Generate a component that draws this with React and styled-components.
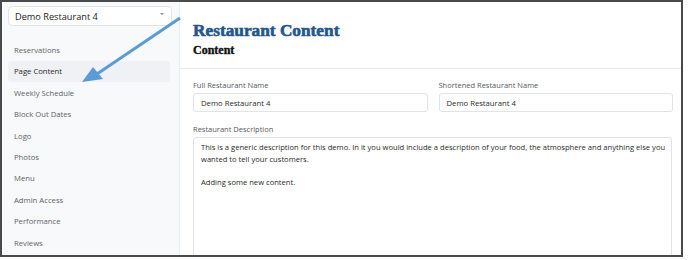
import styled, { createGlobalStyle } from 'styled-components';

const GlobalStyle = createGlobalStyle`
  body {
    margin: 0;
    background: #ffffff;
    font-family: 'Open Sans', 'Liberation Sans', sans-serif;
  }
`;

const Frame = styled.div`
  position: relative;
  display: flex;
  box-sizing: border-box;
  width: 683px;
  height: 257px;
  border: 2px solid #4a4a4a;
  overflow: hidden;
`;

const Sidebar = styled.aside`
  box-sizing: border-box;
  width: 178px;
  flex-shrink: 0;
  padding: 4px 7px 0 6px;
  background: #f8f9fb;
  border-right: 1px solid #eceef1;
`;

const Select = styled.div`
  display: flex;
  align-items: center;
  justify-content: space-between;
  box-sizing: border-box;
  height: 20px;
  padding: 0 7px 0 6px;
  background: #ffffff;
  border: 1px solid #e2e4e8;
  border-radius: 4px;
  font-size: 9.2px;
  color: #222;
`;

const Caret = styled.span`
  width: 0;
  height: 0;
  border-left: 2px solid transparent;
  border-right: 2px solid transparent;
  border-top: 2.5px solid #888;
  margin-top: -4px;
`;

const Nav = styled.nav`
  display: flex;
  flex-direction: column;
  margin-top: 13.3px;
  width: 162px;
`;

const NavItem = styled.div`
  display: flex;
  align-items: center;
  height: 21.4px;
  padding-left: 6px;
  border-radius: 3px;
  font-size: 7.7px;
  color: ${(p) => (p.$active ? '#2a2a2a' : '#5f6368')};
  background: ${(p) => (p.$active ? '#eff1f4' : 'transparent')};
`;

const Main = styled.main`
  flex: 1;
  min-width: 0;
  display: flex;
  flex-direction: column;
  background: #ffffff;
`;

const Header = styled.header`
  box-sizing: border-box;
  flex-shrink: 0;
  height: 67px;
  padding: 19.3px 13px 0;
  border-bottom: 1px solid #e8eaed;
`;

const Title = styled.h1`
  margin: 0;
  font-family: 'Liberation Serif', serif;
  font-weight: 700;
  font-size: 17.3px;
  line-height: 20px;
  color: #23578a;
  -webkit-text-stroke: 0.6px #23578a;
`;

const Subtitle = styled.h2`
  margin: 1.7px 0 0;
  font-family: 'Liberation Serif', serif;
  font-weight: 700;
  font-size: 12px;
  line-height: 14px;
  color: #111;
  -webkit-text-stroke: 0.4px #111;
`;

const Form = styled.div`
  flex-shrink: 0;
  padding: 10.5px 8px 0 13px;
  display: flex;
  flex-direction: column;
`;

const Row = styled.div`
  display: flex;
  gap: 11px;
`;

const Field = styled.div`
  flex: 1;
  min-width: 0;
  display: flex;
  flex-direction: column;
`;

const Label = styled.label`
  font-size: 7.5px;
  line-height: 11px;
  color: #555a60;
  margin-bottom: 2.5px;
`;

const Input = styled.div`
  box-sizing: border-box;
  height: 19px;
  display: flex;
  align-items: center;
  padding: 0 7px;
  border: 1px solid #e0e3e7;
  border-radius: 3px;
  font-size: 7.7px;
  color: #2a2a2a;
`;

const DescriptionField = styled(Field)`
  margin-top: 11.5px;
  margin-right: 1px;
`;

const TextArea = styled.div`
  box-sizing: border-box;
  height: 140px;
  padding: 4px 7px;
  border: 1px solid #e0e3e7;
  border-radius: 3px;
  font-size: 7.6px;
  line-height: 11.5px;
  color: #2a2a2a;
  white-space: pre;
  overflow: hidden;
`;

const Arrow = styled.svg`
  position: absolute;
  left: 0;
  top: 0;
  pointer-events: none;
`;

const navItems = [
  'Reservations',
  'Page Content',
  'Weekly Schedule',
  'Block Out Dates',
  'Logo',
  'Photos',
  'Menu',
  'Admin Access',
  'Performance',
  'Reviews',
];

const description = [
  'This is a generic description for this demo. In it you would include a description of your food, the atmosphere and anything else you',
  'wanted to tell your customers.',
  '',
  'Adding some new content.',
].join('\n');

export default function App() {
  return (
    <>
      <GlobalStyle />
      <Frame>
        <Sidebar>
          <Select>
            Demo Restaurant 4
            <Caret />
          </Select>
          <Nav>
            {navItems.map((item) => (
              <NavItem key={item} $active={item === 'Page Content'}>
                {item}
              </NavItem>
            ))}
          </Nav>
        </Sidebar>
        <Main>
          <Header>
            <Title>Restaurant Content</Title>
            <Subtitle>Content</Subtitle>
          </Header>
          <Form>
            <Row>
              <Field>
                <Label>Full Restaurant Name</Label>
                <Input>Demo Restaurant 4</Input>
              </Field>
              <Field>
                <Label>Shortened Restaurant Name</Label>
                <Input>Demo Restaurant 4</Input>
              </Field>
            </Row>
            <DescriptionField>
              <Label>Restaurant Description</Label>
              <TextArea>{description}</TextArea>
            </DescriptionField>
          </Form>
        </Main>
        {/* annotation arrow pointing at "Page Content" */}
        <Arrow width="683" height="257" viewBox="-2 -2 683 257">
          <line x1="176" y1="14" x2="93" y2="70" stroke="#5b9bd6" strokeWidth="3" />
          <polygon points="78,78 89,63 99,75" fill="#5b9bd6" />
        </Arrow>
      </Frame>
    </>
  );
}
